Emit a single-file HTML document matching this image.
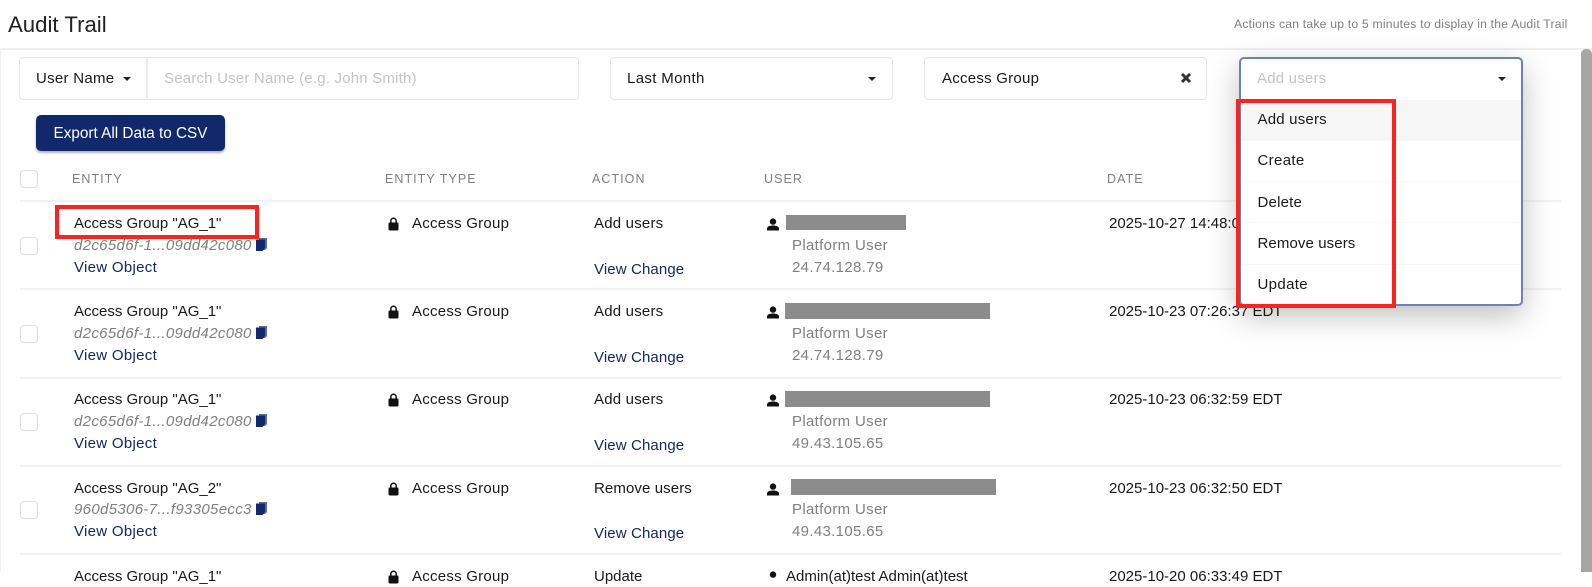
<!DOCTYPE html>
<html lang="en"><head><meta charset="utf-8"><title>Audit Trail</title>
<style>
html,body{margin:0;padding:0;background:#fff}
body{width:1592px;height:572px;overflow:hidden;position:relative;font-family:"Liberation Sans",sans-serif;font-size:15px;color:#1a1a1a}
.t{position:absolute;white-space:nowrap;line-height:20px;margin-top:-9px}
.g{color:#808080;letter-spacing:.33px}.l{color:#11296b;letter-spacing:.3px}.v{color:#11296b;letter-spacing:.12px}.i{font-style:italic;color:#808080;letter-spacing:.33px}
.a{letter-spacing:.25px}.u{letter-spacing:.2px}
.h{font-size:12.5px;letter-spacing:1.05px;color:#808080}
.box{position:absolute;box-sizing:border-box;background:#fff;border:1.5px solid #e6e6e6;border-radius:4px}
.line{position:absolute;left:20px;width:1541px;height:2px;background:#f2f2f2}
.cb{position:absolute;left:20px;width:18px;height:18px;box-sizing:border-box;border:1.5px solid #dedede;border-radius:4px;background:#fff}
.red{position:absolute;box-sizing:border-box;border:4px solid #fb2222}
svg{position:absolute;display:block}
.bar{position:absolute;background:#8c8c8c}
.car{position:absolute;width:0;height:0;border-left:4px solid transparent;border-right:4px solid transparent;border-top:4px solid #222}
</style></head><body>
<div class="t" style="left:8px;top:24px;font-size:22.2px;color:#222">Audit Trail</div>
<div class="t g" style="left:1234px;top:23px;font-size:12.2px;letter-spacing:.2px">Actions can take up to 5 minutes to display in the Audit Trail</div>
<div style="position:absolute;left:0;top:48px;width:1592px;height:2px;background:#efefef"></div>
<div style="position:absolute;left:0;top:50px;width:1px;height:522px;background:#f2f2f2"></div>

<div class="box" style="left:19px;top:57px;width:560px;height:43px"></div>
<div style="position:absolute;left:146px;top:58px;width:2px;height:41px;background:#ececec"></div>
<div class="t" style="left:36px;top:78px;letter-spacing:.28px">User Name</div>
<div class="car" style="left:123px;top:77px"></div>
<div class="t" style="left:164px;top:78px;color:#c4c4c4;letter-spacing:.2px">Search User Name (e.g. John Smith)</div>

<div class="box" style="left:610px;top:57px;width:283px;height:43px"></div>
<div class="t" style="left:627px;top:78px;letter-spacing:.35px">Last Month</div>
<div class="car" style="left:868px;top:77px"></div>

<div class="box" style="left:924px;top:57px;width:283px;height:43px"></div>
<div class="t a" style="left:942px;top:78px">Access Group</div>
<svg style="left:1180px;top:72px" width="12" height="12" viewBox="0 0 12 12"><path d="M2 2 10 10M10 2 2 10" stroke="#333" stroke-width="3"/></svg>

<div style="position:absolute;left:36px;top:115px;width:189px;height:36px;box-sizing:border-box;background:#11296b;border-radius:5px;box-shadow:0 2px 2px rgba(0,0,0,.3);color:#fff;font-size:15.3px;line-height:37px;text-align:center">Export All Data to CSV</div>

<div class="cb" style="top:170px"></div>
<div class="t h" style="left:72px;top:178px">ENTITY</div>
<div class="t h" style="left:385px;top:178px">ENTITY TYPE</div>
<div class="t h" style="left:592px;top:178px">ACTION</div>
<div class="t h" style="left:764px;top:178px">USER</div>
<div class="t h" style="left:1107px;top:178px">DATE</div>

<div class="line" style="top:200px"></div>
<div class="line" style="top:288px"></div>
<div class="line" style="top:377px"></div>
<div class="line" style="top:465px"></div>
<div class="line" style="top:553px"></div>

<!-- Row 1 -->
<div class="cb" style="top:237px"></div>
<div class="t" style="left:74px;top:223px">Access Group "AG_1"</div>
<div class="t i" style="left:74px;top:245px">d2c65d6f-1...09dd42c080</div>
<svg style="left:256px;top:238px" width="11" height="13" viewBox="0 0 11 13"><path d="M3 0H11V10L9 12H3Z" fill="#5a6d9e"/><path d="M0 1.5H9V10L6.5 13H0Z" fill="#11296b"/></svg>
<div class="t l" style="left:74px;top:267px">View Object</div>
<svg style="left:388px;top:217px" width="11" height="14" viewBox="0 0 11 14"><path d="M2.8 6V4a2.7 2.7 0 0 1 5.4 0V6" fill="none" stroke="#111" stroke-width="1.5"/><rect x="0.5" y="5.5" width="10" height="8" rx="1.2" fill="#111"/></svg>
<div class="t a" style="left:412px;top:223px">Access Group</div>
<div class="t u" style="left:594px;top:223px">Add users</div>
<div class="t v" style="left:594px;top:269px">View Change</div>
<svg style="left:767px;top:218px" width="12" height="13" viewBox="0 0 12 13"><circle cx="6" cy="3.6" r="3.2" fill="#111"/><path d="M0 12.5V10.5C0 8.5 3 7.5 6 7.5S12 8.5 12 10.5V12.5Z" fill="#111"/></svg>
<div class="bar" style="left:786px;top:215px;width:120px;height:15px"></div>
<div class="t g" style="left:792px;top:245px">Platform User</div>
<div class="t g" style="left:792px;top:267px">24.74.128.79</div>
<div class="t" style="left:1109px;top:223px">2025-10-27 14:48:01 EDT</div>

<!-- Row 2 -->
<div class="cb" style="top:325px"></div>
<div class="t" style="left:74px;top:311px">Access Group "AG_1"</div>
<div class="t i" style="left:74px;top:333px">d2c65d6f-1...09dd42c080</div>
<svg style="left:256px;top:326px" width="11" height="13" viewBox="0 0 11 13"><path d="M3 0H11V10L9 12H3Z" fill="#5a6d9e"/><path d="M0 1.5H9V10L6.5 13H0Z" fill="#11296b"/></svg>
<div class="t l" style="left:74px;top:355px">View Object</div>
<svg style="left:388px;top:305px" width="11" height="14" viewBox="0 0 11 14"><path d="M2.8 6V4a2.7 2.7 0 0 1 5.4 0V6" fill="none" stroke="#111" stroke-width="1.5"/><rect x="0.5" y="5.5" width="10" height="8" rx="1.2" fill="#111"/></svg>
<div class="t a" style="left:412px;top:311px">Access Group</div>
<div class="t u" style="left:594px;top:311px">Add users</div>
<div class="t v" style="left:594px;top:357px">View Change</div>
<svg style="left:767px;top:306px" width="12" height="13" viewBox="0 0 12 13"><circle cx="6" cy="3.6" r="3.2" fill="#111"/><path d="M0 12.5V10.5C0 8.5 3 7.5 6 7.5S12 8.5 12 10.5V12.5Z" fill="#111"/></svg>
<div class="bar" style="left:785px;top:303px;width:205px;height:16px"></div>
<div class="t g" style="left:792px;top:333px">Platform User</div>
<div class="t g" style="left:792px;top:355px">24.74.128.79</div>
<div class="t" style="left:1109px;top:311px">2025-10-23 07:26:37 EDT</div>

<!-- Row 3 -->
<div class="cb" style="top:413px"></div>
<div class="t" style="left:74px;top:399px">Access Group "AG_1"</div>
<div class="t i" style="left:74px;top:421px">d2c65d6f-1...09dd42c080</div>
<svg style="left:256px;top:414px" width="11" height="13" viewBox="0 0 11 13"><path d="M3 0H11V10L9 12H3Z" fill="#5a6d9e"/><path d="M0 1.5H9V10L6.5 13H0Z" fill="#11296b"/></svg>
<div class="t l" style="left:74px;top:443px">View Object</div>
<svg style="left:388px;top:393px" width="11" height="14" viewBox="0 0 11 14"><path d="M2.8 6V4a2.7 2.7 0 0 1 5.4 0V6" fill="none" stroke="#111" stroke-width="1.5"/><rect x="0.5" y="5.5" width="10" height="8" rx="1.2" fill="#111"/></svg>
<div class="t a" style="left:412px;top:399px">Access Group</div>
<div class="t u" style="left:594px;top:399px">Add users</div>
<div class="t v" style="left:594px;top:445px">View Change</div>
<svg style="left:767px;top:394px" width="12" height="13" viewBox="0 0 12 13"><circle cx="6" cy="3.6" r="3.2" fill="#111"/><path d="M0 12.5V10.5C0 8.5 3 7.5 6 7.5S12 8.5 12 10.5V12.5Z" fill="#111"/></svg>
<div class="bar" style="left:785px;top:391px;width:205px;height:16px"></div>
<div class="t g" style="left:792px;top:421px">Platform User</div>
<div class="t g" style="left:792px;top:443px">49.43.105.65</div>
<div class="t" style="left:1109px;top:399px">2025-10-23 06:32:59 EDT</div>

<!-- Row 4 -->
<div class="cb" style="top:501px"></div>
<div class="t" style="left:74px;top:488px">Access Group "AG_2"</div>
<div class="t i" style="left:74px;top:509px">960d5306-7...f93305ecc3</div>
<svg style="left:256px;top:502px" width="11" height="13" viewBox="0 0 11 13"><path d="M3 0H11V10L9 12H3Z" fill="#5a6d9e"/><path d="M0 1.5H9V10L6.5 13H0Z" fill="#11296b"/></svg>
<div class="t l" style="left:74px;top:531px">View Object</div>
<svg style="left:388px;top:482px" width="11" height="14" viewBox="0 0 11 14"><path d="M2.8 6V4a2.7 2.7 0 0 1 5.4 0V6" fill="none" stroke="#111" stroke-width="1.5"/><rect x="0.5" y="5.5" width="10" height="8" rx="1.2" fill="#111"/></svg>
<div class="t a" style="left:412px;top:488px">Access Group</div>
<div class="t" style="left:594px;top:488px;letter-spacing:.1px">Remove users</div>
<div class="t v" style="left:594px;top:533px">View Change</div>
<svg style="left:767px;top:483px" width="12" height="13" viewBox="0 0 12 13"><circle cx="6" cy="3.6" r="3.2" fill="#111"/><path d="M0 12.5V10.5C0 8.5 3 7.5 6 7.5S12 8.5 12 10.5V12.5Z" fill="#111"/></svg>
<div class="bar" style="left:791px;top:479px;width:205px;height:16px"></div>
<div class="t g" style="left:792px;top:509px">Platform User</div>
<div class="t g" style="left:792px;top:531px">49.43.105.65</div>
<div class="t" style="left:1109px;top:488px">2025-10-23 06:32:50 EDT</div>

<!-- Row 5 (clipped) -->
<div class="t" style="left:74px;top:576px">Access Group "AG_1"</div>
<svg style="left:388px;top:570px" width="11" height="14" viewBox="0 0 11 14"><path d="M2.8 6V4a2.7 2.7 0 0 1 5.4 0V6" fill="none" stroke="#111" stroke-width="1.5"/><rect x="0.5" y="5.5" width="10" height="8" rx="1.2" fill="#111"/></svg>
<div class="t a" style="left:412px;top:576px">Access Group</div>
<div class="t" style="left:594px;top:576px">Update</div>
<svg style="left:767px;top:571px" width="12" height="13" viewBox="0 0 12 13"><circle cx="6" cy="3.6" r="3.2" fill="#111"/></svg>
<div class="t" style="left:786px;top:576px">Admin(at)test Admin(at)test</div>
<div class="t" style="left:1109px;top:576px">2025-10-20 06:33:49 EDT</div>

<!-- Scrollbar -->
<div style="position:absolute;left:1581px;top:49px;width:11px;height:523px;background:#a6a6a6;border-radius:5px 5px 0 0"></div>

<!-- Dropdown -->
<div style="position:absolute;left:1239px;top:57px;width:284px;height:249px;box-sizing:border-box;background:#fff;border:2px solid #6d83b3;border-radius:5px;box-shadow:0 10px 30px rgba(0,0,0,.25)"></div>
<div class="t u" style="left:1257px;top:78px;color:#c4c4c4">Add users</div>
<div class="car" style="left:1498px;top:77px"></div>
<div style="position:absolute;left:1241px;top:100px;width:280px;height:41px;background:#f6f6f6"></div>
<div style="position:absolute;left:1241px;top:181px;width:280px;height:1px;background:#f7f7f7"></div>
<div style="position:absolute;left:1241px;top:222px;width:280px;height:1px;background:#f7f7f7"></div>
<div style="position:absolute;left:1241px;top:264px;width:280px;height:1px;background:#f7f7f7"></div>
<div class="t u" style="left:1257.5px;top:119px">Add users</div>
<div class="t" style="left:1257.5px;top:160px;letter-spacing:.35px">Create</div>
<div class="t u" style="left:1257.5px;top:202px">Delete</div>
<div class="t" style="left:1257.5px;top:243px;letter-spacing:.1px">Remove users</div>
<div class="t" style="left:1257.5px;top:284px;letter-spacing:.35px">Update</div>

<!-- Annotations -->
<div class="red" style="left:55px;top:205px;width:204px;height:34px"></div>
<div class="red" style="left:1236px;top:99px;width:160px;height:209px"></div>
</body></html>
